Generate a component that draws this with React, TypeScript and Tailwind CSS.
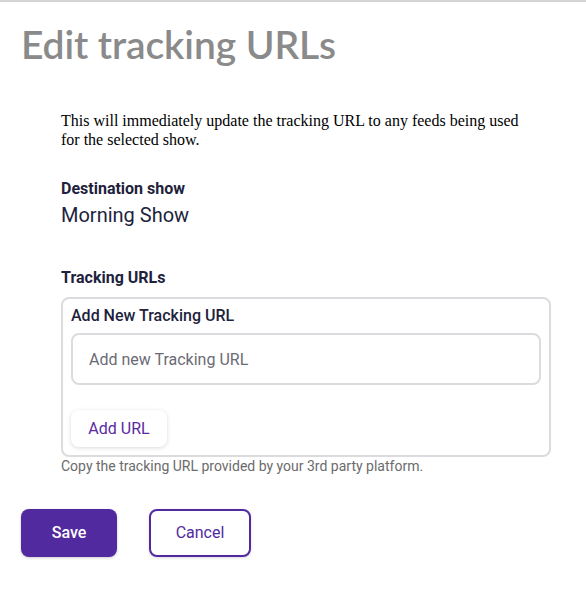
import React from "react";

export default function App() {
  return (
    <div className="w-[586px] h-[600px] bg-white border-t-2 border-[#d4d4d4] relative overflow-hidden" style={{ fontFamily: "Roboto, 'Liberation Sans', sans-serif" }}>
      <h1 className="ml-[21px] mt-[16px] text-[39px] leading-[52px] font-semibold text-[#8a8a8a] tracking-[-0.1px]" style={{ fontFamily: "Lato, 'Open Sans', sans-serif" }}>
        Edit tracking URLs
      </h1>
      <div className="ml-[61px] mr-[35px] mt-[41px]">
        <p className="text-[16px] leading-[19px] text-black w-[470px]" style={{ fontFamily: "'Liberation Serif', serif" }}>
          This will immediately update the tracking URL to any feeds being used for the selected show.
        </p>
        <div className="mt-[30px] text-[16px] leading-[20px] font-bold text-[#221f3d]">Destination show</div>
        <div className="mt-[3px] text-[20px] leading-[26px] text-[#221f3d]">Morning Show</div>
        <div className="mt-[40px] text-[16px] leading-[20px] font-bold text-[#221f3d]">Tracking URLs</div>
        <div className="mt-[9px] border-2 border-[#dcdce0] rounded-[8px] px-[8px] pt-[7px] pb-[8px]">
          <div className="text-[16px] leading-[20px] font-medium text-[#221f3d]">Add New Tracking URL</div>
          <input
            className="mt-[7px] w-full h-[52px] border-2 border-[#dcdce0] rounded-[8px] px-[16px] text-[16px] text-[#6b6b75] placeholder:text-[#6b6b75] outline-none"
            placeholder="Add new Tracking URL"
          />
          <button className="mt-[25px] h-[37px] w-[96px] rounded-[8px] bg-white text-[16px] text-[#5b2aa0] shadow-[0_1px_4px_rgba(0,0,0,0.15)]">
            Add URL
          </button>
        </div>
        <div className="mt-0 text-[14px] leading-[18px] text-[#6b6b6b]">Copy the tracking URL provided by your 3rd party platform.</div>
      </div>
      <div className="ml-[21px] mt-[34px] flex gap-[32px]">
        <button className="w-[96px] h-[48px] rounded-[8px] bg-[#522a9f] text-white text-[16px] font-medium shadow-[0_1px_3px_rgba(0,0,0,0.2)]">
          Save
        </button>
        <button className="w-[102px] h-[48px] rounded-[8px] bg-white border-2 border-[#522a9f] text-[#522a9f] text-[16px] shadow-[0_1px_3px_rgba(0,0,0,0.15)]">
          Cancel
        </button>
      </div>
    </div>
  );
}
